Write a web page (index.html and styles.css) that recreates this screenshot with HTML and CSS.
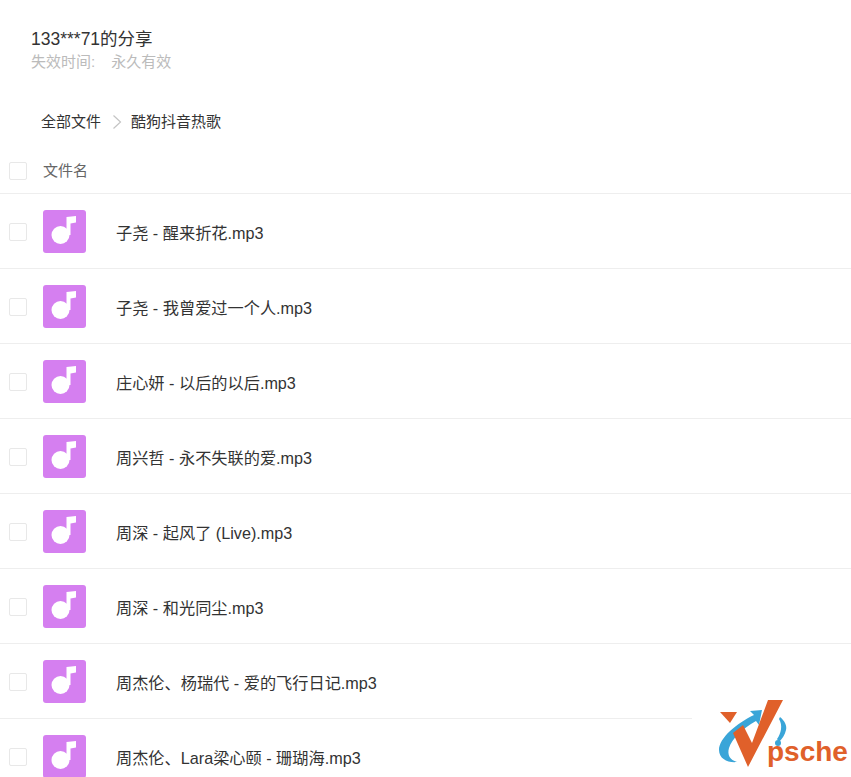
FILE: index.html
```html
<!DOCTYPE html>
<html lang="zh-CN">
<head>
    <meta charset="UTF-8">
    <meta name="viewport" content="width=device-width, initial-scale=1.0">
    <title>133***71的分享</title>
    <link rel="stylesheet" href="styles.css">
</head>
<body>
    <svg class="defs" width="0" height="0">
        <symbol id="music" viewBox="0 0 43 43">
            <rect width="43" height="43" rx="3" fill="#d57ff0"/>
            <circle cx="17.5" cy="25" r="9" fill="#fff"/>
            <path d="M23.5 7 L33 6 V12.5 L27.5 13.5 V25 H23.5 Z" fill="#fff"/>
        </symbol>
    </svg>

    <div class="share-head">
        <h1 class="share-title">133***71的分享</h1>
        <p class="share-expire"><span>失效时间:</span><span>永久有效</span></p>
    </div>

    <div class="crumbs">
        <span>全部文件</span>
        <svg class="crumb-arrow" viewBox="0 0 10 16" width="10" height="16"><path d="M1.5 1.5 L8.5 8 L1.5 14.5" fill="none" stroke="#c4c4c4" stroke-width="1.2"/></svg>
        <span>酷狗抖音热歌</span>
    </div>

    <div class="list-head">
        <span class="check"></span>
        <span class="list-head-name">文件名</span>
    </div>

    <ul class="files">
        <li class="file">
            <span class="check"></span>
            <svg class="music"><use href="#music"/></svg>
            <span class="file-name">子尧 - 醒来折花.mp3</span>
        </li>
        <li class="file">
            <span class="check"></span>
            <svg class="music"><use href="#music"/></svg>
            <span class="file-name">子尧 - 我曾爱过一个人.mp3</span>
        </li>
        <li class="file">
            <span class="check"></span>
            <svg class="music"><use href="#music"/></svg>
            <span class="file-name">庄心妍 - 以后的以后.mp3</span>
        </li>
        <li class="file">
            <span class="check"></span>
            <svg class="music"><use href="#music"/></svg>
            <span class="file-name">周兴哲 - 永不失联的爱.mp3</span>
        </li>
        <li class="file">
            <span class="check"></span>
            <svg class="music"><use href="#music"/></svg>
            <span class="file-name">周深 - 起风了 (Live).mp3</span>
        </li>
        <li class="file">
            <span class="check"></span>
            <svg class="music"><use href="#music"/></svg>
            <span class="file-name">周深 - 和光同尘.mp3</span>
        </li>
        <li class="file">
            <span class="check"></span>
            <svg class="music"><use href="#music"/></svg>
            <span class="file-name">周杰伦、杨瑞代 - 爱的飞行日记.mp3</span>
        </li>
        <li class="file">
            <span class="check"></span>
            <svg class="music"><use href="#music"/></svg>
            <span class="file-name">周杰伦、Lara梁心颐 - 珊瑚海.mp3</span>
        </li>
    </ul>

    <div class="watermark">
        <svg class="watermark-logo" viewBox="0 0 70 70" width="70" height="70">
            <path d="M35 15 C18 23 0 38 0 50 C0 59 9 63 18 62 C11 60 8 55 10 48 C13 39 23 29 37 21 L40 25 L43 10 L31 11 Z" fill="#3aa5d8"/>
            <path d="M61 17 C66 21 68 26 67 30 C66 35 63 39 60 42 L58 39 C62 34 64 25 60 19 Z" fill="#3aa5d8"/>
            <circle cx="59" cy="43" r="3" fill="#3aa5d8"/>
            <path d="M1 12 L18 12 L11 23 Z" fill="#e0602a"/>
            <path d="M14 33 L24 25 L33 43 L49 0 L64 0 L29 67 Z" fill="#e0602a"/>
        </svg>
        <span class="watermark-text">psche</span>
    </div>
</body>
</html>
```

FILE: styles.css
```css
html, body {
    height: 100%;
    overflow: hidden;
}
body {
    margin: 0;
    background-color: #ffffff;
    color: #333;
    font-family: "Liberation Sans", "Noto Sans CJK SC", sans-serif;
    position: relative;
}
.defs {
    position: absolute;
}
.share-head {
    padding: 28px 0 0 31px;
}
.share-title {
    margin: 0;
    font-size: 17.5px;
    font-weight: normal;
    line-height: 22px;
    color: #333;
}
.share-expire {
    margin: 2px 0 0;
    font-size: 15px;
    line-height: 20px;
    color: #bbb;
    display: flex;
    gap: 16px;
}
.crumbs {
    display: flex;
    align-items: center;
    margin-top: 40px;
    padding-left: 41px;
    font-size: 15px;
    line-height: 20px;
    color: #333;
}
.crumb-arrow {
    margin: 0 9px 0 11px;
}
.list-head {
    display: flex;
    align-items: center;
    height: 46px;
    margin-top: 16px;
    padding-left: 9px;
    box-sizing: border-box;
    border-bottom: 1px solid #eee;
    font-size: 15px;
    color: #666;
}
.list-head-name {
    margin-left: 16px;
    margin-top: -2px;
}
.check {
    flex: none;
    width: 16px;
    height: 16px;
    border: 1px solid #e8e8e8;
    border-radius: 2px;
    background-color: #fff;
}
.files {
    list-style: none;
    margin: 0;
    padding: 0;
}
.file {
    display: flex;
    align-items: center;
    height: 75px;
    padding-left: 9px;
    box-sizing: border-box;
    border-bottom: 1px solid #eee;
    color: #333;
}
.file .check {
    margin-top: 1px;
}
.music {
    flex: none;
    width: 43px;
    height: 43px;
    margin-left: 16px;
}
.file-name {
    margin-left: 30px;
    margin-top: 2px;
    font-size: 16.2px;
}
.watermark {
    position: absolute;
    right: 0;
    bottom: 0;
    width: 159px;
    height: 87px;
    background-color: #fff;
}
.watermark-logo {
    position: absolute;
    left: 27px;
    top: 10px;
}
.watermark-text {
    position: absolute;
    left: 75px;
    top: 47px;
    font-size: 28px;
    line-height: 30px;
    font-weight: bold;
    color: #e0602a;
}
```
